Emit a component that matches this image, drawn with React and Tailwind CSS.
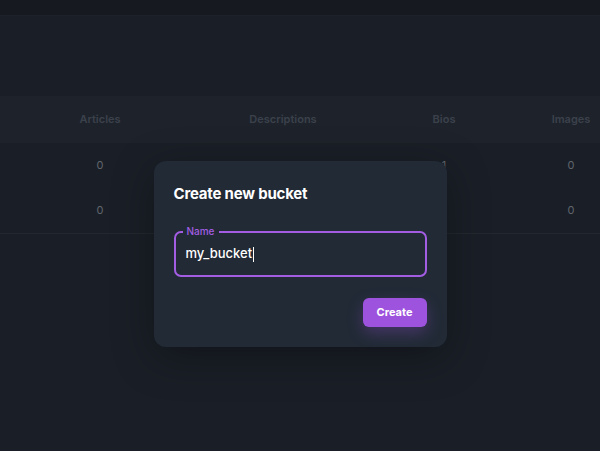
import React from "react";

export default function App() {
  const cols = ["Articles", "Descriptions", "Bios", "Images"];
  const rows = [
    ["0", "1", "1", "0"],
    ["0", "1", "1", "0"],
  ];
  return (
    <div
      className="relative w-[600px] h-[451px] overflow-hidden bg-[#1a1f27]"
      style={{ fontFamily: "Inter, 'Noto Sans', sans-serif" }}
    >
      <div className="h-[16px] bg-[#161a20] border-b border-[#1d222a]" />
      <div className="h-[80px]" />
      <div className="grid grid-cols-[200px_166px_156px_98px] h-[47px] items-center bg-[#1e232b] text-[11px] font-semibold text-[#3b414b]">
        {cols.map((c) => (
          <div key={c} className="text-center">{c}</div>
        ))}
      </div>
      <div className="border-b border-[#23282f]">
        {rows.map((r, i) => (
          <div
            key={i}
            className="grid grid-cols-[200px_166px_156px_98px] h-[45px] items-center text-[11px] text-[#60656d]"
          >
            {r.map((v, j) => (
              <div key={j} className="text-center">{v}</div>
            ))}
          </div>
        ))}
      </div>

      <div className="absolute inset-0 flex justify-center pt-[161px]">
        <div className="w-[293px] h-[186px] rounded-[12px] bg-[#212a35] shadow-[0_10px_40px_rgba(0,0,0,0.35)] px-[20px] pt-[25px]">
          <h2 className="text-[15px] font-bold text-white leading-none tracking-[-0.2px]">
            Create new bucket
          </h2>
          <div className="relative mt-[30px] h-[46px] rounded-[7px] border-2 border-[#a35de3] flex items-center px-[10px]">
            <span className="absolute -top-[7px] left-[7px] px-[4px] bg-[#212a35] text-[10px] leading-none text-[#a35de3] font-medium">
              Name
            </span>
            <span className="text-[13px] text-white font-medium">my_bucket</span>
            <span className="w-px h-[15px] bg-white ml-[1px]" />
          </div>
          <div className="flex justify-end mt-[21px]">
            <button className="w-[64px] h-[29px] rounded-[6px] bg-[#9d53dd] text-white text-[11px] font-bold shadow-[0_6px_16px_rgba(157,83,221,0.3)]">
              Create
            </button>
          </div>
        </div>
      </div>
    </div>
  );
}
